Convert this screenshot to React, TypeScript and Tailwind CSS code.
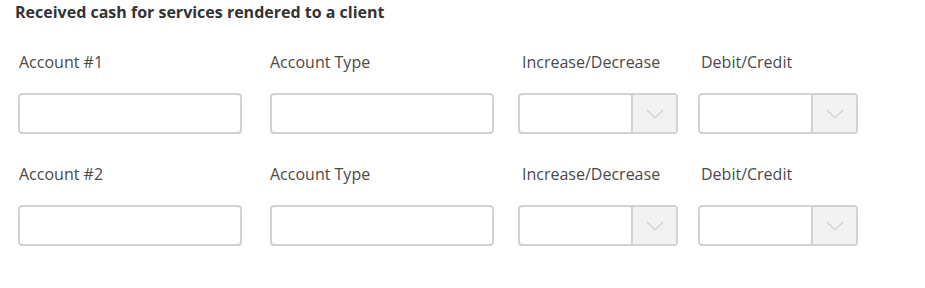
import React from 'react';

const font = { fontFamily: '"Open Sans", "Liberation Sans", sans-serif' };

const Chevron: React.FC = () => (
  <svg width="18" height="10" viewBox="0 0 18 10" fill="none">
    <path d="M1 1l8 8 8-8" stroke="#cfcfcf" strokeWidth="1.2" />
  </svg>
);

const TextBox: React.FC = () => (
  <div className="h-[41px] w-[224px] rounded-[4px] border-2 border-[#d2d2d2] bg-white" />
);

const SelectBox: React.FC = () => (
  <div className="flex h-[41px] w-[160px] overflow-hidden rounded-[4px] border-2 border-[#d2d2d2] bg-white">
    <div className="flex-1" />
    <div className="flex w-[45px] items-center justify-center border-l-2 border-[#d2d2d2] bg-[#f2f2f2]">
      <Chevron />
    </div>
  </div>
);

const EntryRow: React.FC<{ n: number }> = ({ n }) => (
  <div className="grid grid-cols-[252px_248px_180px_160px]">
    <div>
      <div className="text-[16px] leading-[22px] text-[#4a4a4a] pl-px">Account #{n}</div>
      <div className="mt-5">
        <TextBox />
      </div>
    </div>
    <div>
      <div className="text-[16px] leading-[22px] text-[#4a4a4a]">Account Type</div>
      <div className="mt-5">
        <TextBox />
      </div>
    </div>
    <div>
      <div className="text-[16px] leading-[22px] text-[#4a4a4a] pl-1">Increase/Decrease</div>
      <div className="mt-5">
        <SelectBox />
      </div>
    </div>
    <div>
      <div className="text-[16px] leading-[22px] text-[#4a4a4a] pl-[3px]">Debit/Credit</div>
      <div className="mt-5">
        <SelectBox />
      </div>
    </div>
  </div>
);

export default function App() {
  return (
    <div className="min-h-[288px] w-[925px] bg-white pt-[2px]" style={font}>
      <h2 className="pl-[15px] text-[16px] font-bold leading-5 text-[#333333]">
        Received cash for services rendered to a client
      </h2>
      <div className="mt-[29px] pl-[18px]">
        <EntryRow n={1} />
      </div>
      <div className="mt-[29px] pl-[18px]">
        <EntryRow n={2} />
      </div>
    </div>
  );
}
